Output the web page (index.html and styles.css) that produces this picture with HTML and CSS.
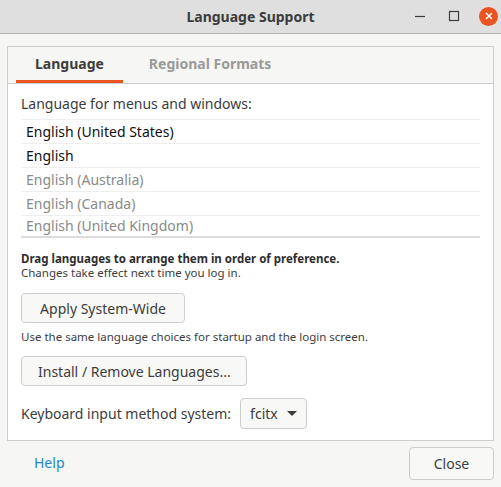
FILE: index.html
```html
<!DOCTYPE html>
<html lang="en">
<head>
    <meta charset="UTF-8">
    <title>Language Support</title>
    <link rel="stylesheet" href="styles.css">
</head>
<body>
    <div class="window">
        <div class="titlebar">
            <span class="title">Language Support</span>
            <div class="controls">
                <span class="ctl">
                    <svg width="12" height="12" viewBox="0 0 12 12"><path d="M1 6.5h10" stroke="#3c3c3c" stroke-width="1.2"/></svg>
                </span>
                <span class="ctl">
                    <svg width="12" height="12" viewBox="0 0 12 12"><rect x="1.5" y="1.5" width="9" height="9" fill="none" stroke="#3c3c3c" stroke-width="1.2"/></svg>
                </span>
                <span class="ctl close">
                    <svg width="8" height="8" viewBox="0 0 8 8"><path d="M1 1l6 6M7 1l-6 6" stroke="#fff" stroke-width="1.5"/></svg>
                </span>
            </div>
        </div>

        <div class="body">
            <div class="notebook">
                <div class="tabs">
                    <div class="tab active">Language</div>
                    <div class="tab">Regional Formats</div>
                </div>
                <div class="page">
                    <div class="label">Language for menus and windows:</div>
                    <div class="langlist">
                        <div class="row">English (United States)</div>
                        <div class="row">English</div>
                        <div class="row muted">English (Australia)</div>
                        <div class="row muted">English (Canada)</div>
                        <div class="row muted last">English (United Kingdom)</div>
                    </div>
                    <div class="hint">
                        <div class="strong">Drag languages to arrange them in order of preference.</div>
                        <div>Changes take effect next time you log in.</div>
                    </div>
                    <button class="btn apply">Apply System-Wide</button>
                    <div class="hint small">Use the same language choices for startup and the login screen.</div>
                    <button class="btn install">Install / Remove Languages...</button>
                    <div class="im">
                        <span>Keyboard input method system:</span>
                        <button class="btn combo">fcitx
                            <svg width="10" height="6" viewBox="0 0 10 6"><path d="M0 0h10L5 5z" fill="#3c3c3c"/></svg>
                        </button>
                    </div>
                </div>
            </div>
            <div class="footer">
                <a class="help" href="#">Help</a>
                <button class="btn closebtn">Close</button>
            </div>
        </div>
    </div>
</body>
</html>
```

FILE: styles.css
```css
body {
    margin: 0;
    font-family: 'Noto Sans', sans-serif;
    font-size: 14px;
    color: #3c3c3c;
    background: #f6f6f5;
}

.window {
    width: 501px;
    height: 487px;
    display: flex;
    flex-direction: column;
}

.titlebar {
    height: 33px;
    background: #dfdfdf;
    border-bottom: 1px solid #b6b6b3;
    display: flex;
    align-items: center;
    justify-content: center;
    position: relative;
}

.title {
    font-weight: bold;
    font-size: 14px;
    color: #3c3c3c;
}

.controls {
    position: absolute;
    right: 3px;
    top: 6px;
    display: flex;
    align-items: center;
    gap: 16px;
}

.ctl {
    width: 18px;
    height: 20px;
    display: flex;
    align-items: center;
    justify-content: center;
}

.ctl.close {
    width: 19px;
    height: 19px;
    border-radius: 50%;
    background: #e95420;
}

.body {
    flex: 1;
    padding: 12px 7px 0 7px;
}

.notebook {
    border: 1px solid #cdcdcd;
    background: #fff;
    height: 393px;
    display: flex;
    flex-direction: column;
}

.tabs {
    display: flex;
    background: #f6f6f5;
    border-bottom: 1px solid #cdcdcd;
    padding-left: 8px;
    height: 36px;
}

.tab {
    font-weight: bold;
    font-size: 14px;
    color: #9a9a98;
    padding: 0 19px;
    line-height: 34px;
    border-bottom: 3px solid transparent;
}

.tab.active {
    color: #3c3c3c;
    border-bottom-color: #e95420;
    margin-right: 7px;
}

.page {
    padding: 10px 12px 0 13px;
}

.label {
    font-size: 14px;
    line-height: 20px;
    margin-bottom: 5px;
}

.langlist {
    border-top: 1px solid #efefef;
    border-bottom: 2px solid #dcdcdc;
    margin-right: 1px;
}

.row {
    height: 23px;
    line-height: 23px;
    padding-left: 5px;
    color: #111;
    border-bottom: 1px solid #efefef;
}

.row.last {
    border-bottom: none;
    height: 20px;
    line-height: 20px;
}

.row.muted {
    color: #8a8a88;
}

.hint {
    font-size: 11.5px;
    line-height: 14px;
    margin-top: 14px;
}

.hint .strong {
    font-weight: bold;
    color: #2e2e2e;
}

.hint.small {
    margin-top: 7px;
}

.btn {
    font-family: inherit;
    font-size: 14px;
    color: #3c3c3c;
    background: #f8f8f7;
    border: 1px solid #cdcdcd;
    border-radius: 4px;
    height: 30px;
    padding: 0 16px;
    display: block;
    white-space: nowrap;
}

.apply {
    width: 164px;
    margin-top: 13px;
}

.install {
    width: 226px;
    margin-top: 12px;
}

.im {
    display: flex;
    align-items: center;
    gap: 9px;
    margin-top: 12px;
}

.combo {
    width: 67px;
    height: 31px;
    padding: 0 9px;
    display: flex;
    align-items: center;
    justify-content: space-between;
}

.footer {
    display: flex;
    justify-content: space-between;
    align-items: center;
    padding: 6px 0 0 27px;
}

.help {
    color: #1f86c8;
    text-decoration: none;
    font-size: 14px;
    margin-top: -3px;
}

.closebtn {
    width: 85px;
    height: 33px;
}
```
